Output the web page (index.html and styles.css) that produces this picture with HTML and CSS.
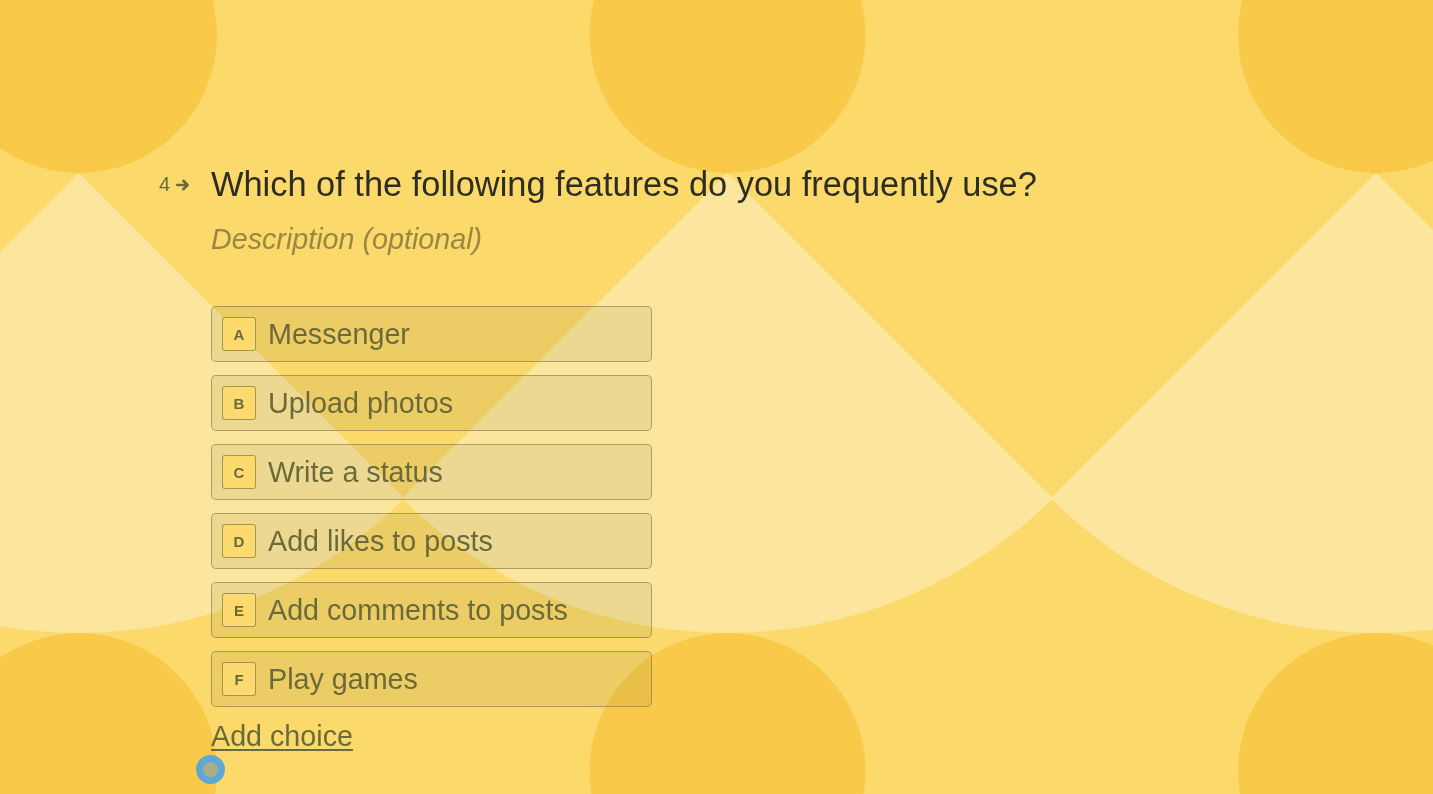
FILE: index.html
```html
<!DOCTYPE html>
<html lang="en">
<head>
<meta charset="utf-8">
<title>Question 4</title>
<link rel="stylesheet" href="styles.css">
</head>
<body>
<svg class="bg" width="1433" height="794" viewBox="0 0 1433 794" aria-hidden="true">
  <rect width="1433" height="794" fill="#FBD96A"/>
  <g fill="#FCE59C">
    <path d="M79 173 L-246.3 498.3 A460 460 0 0 0 404.3 498.3 Z"/>
    <path d="M727.5 173 L402.2 498.3 A460 460 0 0 0 1052.8 498.3 Z"/>
    <path d="M1376 173 L1050.7 498.3 A460 460 0 0 0 1701.3 498.3 Z"/>
  </g>
  <g fill="#F9C94A">
    <circle cx="79" cy="35" r="138"/>
    <circle cx="727.5" cy="35" r="138"/>
    <circle cx="1376" cy="35" r="138"/>
    <circle cx="79" cy="771" r="138"/>
    <circle cx="727.5" cy="771" r="138"/>
    <circle cx="1376" cy="771" r="138"/>
  </g>
</svg>
<main class="content">
  <div class="question-row">
    <div class="qnum">
      <span>4</span>
      <svg class="arrow" width="14" height="12" viewBox="0 0 14 12"><path d="M1.3 6 H11.5 M7.3 1.8 L11.6 6 L7.3 10.2" fill="none" stroke="#6b6a3a" stroke-width="2.6" stroke-linecap="round" stroke-linejoin="round"/></svg>
    </div>
    <h1 class="qtext">Which of the following features do you frequently use?</h1>
  </div>
  <p class="desc">Description (optional)</p>
  <ul class="choices">
    <li class="choice"><span class="key">A</span><span class="label">Messenger</span></li>
    <li class="choice"><span class="key">B</span><span class="label">Upload photos</span></li>
    <li class="choice"><span class="key">C</span><span class="label">Write a status</span></li>
    <li class="choice"><span class="key">D</span><span class="label">Add likes to posts</span></li>
    <li class="choice"><span class="key">E</span><span class="label">Add comments to posts</span></li>
    <li class="choice"><span class="key">F</span><span class="label">Play games</span></li>
  </ul>
  <a class="add" href="#">Add choice</a>
  <div class="dot"></div>
</main>
</body>
</html>
```

FILE: styles.css
```css
html, body {
  margin: 0;
  padding: 0;
  width: 1433px;
  height: 794px;
  overflow: hidden;
  font-family: "Liberation Sans", Arial, sans-serif;
}

.bg {
  position: fixed;
  left: 0;
  top: 0;
  z-index: 0;
}

.content {
  position: relative;
  z-index: 1;
  padding: 163px 0 0 211px;
}

.question-row {
  display: flex;
  align-items: center;
  margin-left: -52px;
}

.qnum {
  width: 52px;
  display: flex;
  align-items: center;
  gap: 6px;
  color: #6b6a3a;
  font-size: 20px;
  line-height: 41px;
  padding-top: 1px;
}

.arrow {
  display: block;
}

.qtext {
  margin: 0;
  font-weight: 400;
  font-size: 34.4px;
  line-height: 41px;
  color: #2e2d24;
}

.desc {
  margin: 16px 0 0;
  font-style: italic;
  font-size: 28.7px;
  line-height: 36px;
  color: #978844;
}

.choices {
  list-style: none;
  margin: 49px 0 0;
  padding: 0;
  display: flex;
  flex-direction: column;
  gap: 13px;
}

.choice {
  box-sizing: border-box;
  width: 441px;
  height: 56px;
  display: flex;
  align-items: center;
  padding-left: 10px;
  border: 1px solid rgba(107, 104, 58, 0.5);
  border-radius: 5px;
  background: rgba(107, 104, 58, 0.1);
}

.key {
  box-sizing: border-box;
  width: 34px;
  height: 34px;
  display: flex;
  align-items: center;
  justify-content: center;
  border: 1px solid rgba(107, 104, 58, 0.6);
  border-radius: 3px;
  background: #fcda6d;
  color: #6b6a3a;
  font-weight: 700;
  font-size: 15px;
}

.label {
  margin-left: 12px;
  font-size: 28.7px;
  color: #6b6a3a;
  white-space: nowrap;
}

.add {
  display: block;
  width: max-content;
  margin-top: 12px;
  font-size: 28.7px;
  line-height: 34px;
  color: #6b6a3a;
  text-decoration: underline;
  text-decoration-thickness: 2px;
  text-underline-offset: 3px;
}

.dot {
  box-sizing: border-box;
  width: 29px;
  height: 29px;
  margin: 2px 0 0 -15px;
  border-radius: 50%;
  border: 7px solid #5fa7d4;
  background: #a9ad88;
}
```
